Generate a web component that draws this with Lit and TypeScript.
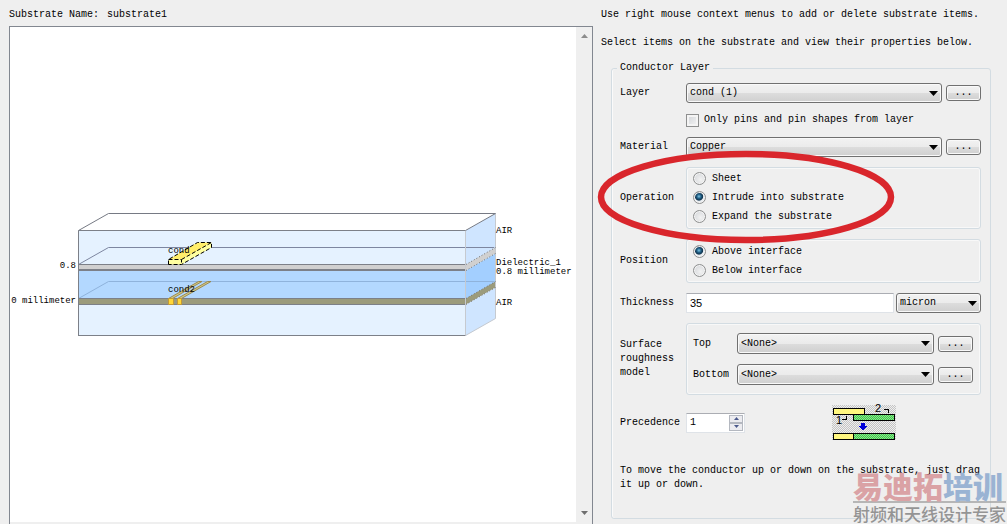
import { LitElement, html, css, svg } from "lit";
import { customElement, property, state } from "lit/decorators.js";

@customElement("substrate-view")
class SubstrateView extends LitElement {
  static styles = css`
    :host {
      display: grid;
      grid-template-columns: minmax(0, 1fr) 16px;
      grid-template-rows: minmax(0, 1fr) 2px;
      border: 1px solid #828790;
      border-bottom: 0;
      background: #efefef;
      min-height: 0;
    }
    .canvas {
      display: flex;
      align-items: center;
      background: #fff;
      min-height: 0;
      overflow: hidden;
    }
    .drawing {
      display: block;
      width: 100%;
    }
    .label {
      font: 9px "Liberation Mono", monospace;
      fill: #000;
    }
    .end {
      text-anchor: end;
    }
    .scroll {
      display: flex;
      flex-direction: column;
      justify-content: space-between;
      background: #efefef;
    }
    .arrow {
      display: block;
      width: 16px;
      height: 18px;
    }
  `;

  render() {
    return html`
      <div class="canvas">
        <svg class="drawing" viewBox="10 200 566 149" role="img" aria-label="Substrate cross section">
          <g shape-rendering="crispEdges">
            <rect x="78" y="230" width="388" height="35" fill="#e5f2ff" />
            <rect x="78" y="265" width="388" height="5" fill="#d0d0d0" />
            <rect x="78" y="271" width="388" height="28" fill="#b3d8ff" />
            <rect x="78" y="299" width="388" height="5" fill="#9b9b7c" />
            <rect x="78" y="305" width="388" height="30" fill="#e5f2ff" />
          </g>
          <path d="M466 230.500L495.500 213.500V248L466 265Z" fill="#cfe5ff" />
          <path d="M466 264.500L495.500 247.500V253.500L466 270.500Z" fill="#d0d0d0" />
          <path d="M466 270.500L495.500 253.500V282L466 299Z" fill="#a3cfff" />
          <path d="M466 298.500L495.500 281.500V287.500L466 304.500Z" fill="#9b9b7c" />
          <path d="M466 304.500L495.500 287.500V318.500L466 335.500Z" fill="#cfe5ff" />
          <g fill="none">
            <path d="M78.500 264.500L108.500 247.500H494" stroke="#7d86a0" />
            <path d="M78.500 298.500L108.500 281.500H494" stroke="#8fb3dc" />
            <path d="M78.500 230.500L108.500 213.500H495.500L465.500 230.500" stroke="#767a84" />
            <path d="M78.500 335.500V230.500H465.500M78 264.500H466M78 298.500H466M78 304.500H466M78 335.500H466" stroke="#7c8088" />
            <path d="M78 270H466" stroke="#7c8088" stroke-width="2" />
            <path d="M465.500 231V335.500L495.500 318.500V214" stroke="#c6cad0" />
            <path d="M466 264.500L495.500 247.500M466 270.500L495.500 253.500M466 298.500L495.500 281.500M466 304.500L495.500 287.500" stroke="#707070" stroke-dasharray="1 2" />
          </g>
          <path d="M168.500 259.500L197.500 242.500H211.500L182 259.500Z" fill="#ffee6b" />
          <path d="M168.500 259.500H181.500L211.500 242.500V247.500L181.500 264.500H168.500Z" fill="#ffffa0" />
          <path d="M168.500 264.500V259.500L197.500 242.500H211.500V247.500L181.500 264.500ZM168.500 259.500H181.500V264.500M181.500 259.500L211.500 242.500" fill="none" stroke="#000" stroke-dasharray="4 2" />
          <g fill="#dcc35c" stroke="#9a8a52">
            <path d="M168.500 298.500L198.500 281.500H202L172.500 298.500ZM177.500 298.500L207.500 281.500H211L181.500 298.500Z" fill-opacity=".75" />
            <path d="M168.500 298.500H173.500V304.500H168.500ZM177.500 298.500H181.500V304.500H177.500Z" fill="#ffd737" stroke="#c39a35" />
          </g>
          <text class="label" x="168" y="253">cond</text>
          <text class="label" x="168" y="292">cond2</text>
          <text class="label end" x="76" y="268">0.8</text>
          <text class="label end" x="76" y="303">0 millimeter</text>
          <text class="label" x="496" y="233">AIR</text>
          <text class="label" x="496" y="265">Dielectric_1</text>
          <text class="label" x="496" y="274">0.8 millimeter</text>
          <text class="label" x="496" y="305">AIR</text>
        </svg>
      </div>
      <div class="scroll">
        <svg class="arrow" viewBox="0 0 16 18"><path d="M5 11L8.500 7L12 11Z" fill="#8c8c8c" /></svg>
        <svg class="arrow" viewBox="0 0 16 18"><path d="M5 7H12L8.500 11Z" fill="#6e6e6e" /></svg>
      </div>
    `;
  }
}

@customElement("combo-box")
class ComboBox extends LitElement {
  @property() label = "";
  @property() value = "";

  static styles = css`
    :host {
      display: grid;
      min-width: 0;
    }
    .select,
    .arrow {
      grid-area: 1 / 1;
    }
    .select {
      appearance: none;
      box-sizing: border-box;
      width: 100%;
      height: 100%;
      margin: 0;
      padding: 0 18px 0 3px;
      border: 1px solid #707070;
      border-radius: 3px;
      box-shadow: inset 0 0 0 1px #f9f9f9;
      background: linear-gradient(#f2f2f2, #ebebeb 50%, #dddddd 50%, #cfcfcf);
      color: #000;
      font: 10px/14px "Liberation Mono", monospace;
    }
    .arrow {
      width: 9px;
      height: 5px;
      place-self: center end;
      margin-right: 4px;
      pointer-events: none;
    }
  `;

  render() {
    return html`
      <select class="select" aria-label=${this.label}>
        <option>${this.value}</option>
      </select>
      <svg class="arrow" viewBox="0 0 9 5"><path d="M0 0H9L4.500 5Z" /></svg>
    `;
  }
}

const precedencePicture = svg`
  <defs>
    <pattern id="grey" width="2" height="2" patternUnits="userSpaceOnUse">
      <path d="M0 0H1V1H0ZM1 1H2V2H1Z" fill="#c4c4c4" />
    </pattern>
    <pattern id="green" width="2" height="2" patternUnits="userSpaceOnUse">
      <rect width="2" height="2" fill="#8de08d" />
      <path d="M0 0H1V1H0ZM1 1H2V2H1Z" fill="#3fca4c" />
    </pattern>
  </defs>
  <g shape-rendering="crispEdges">
    <rect width="64" height="35" fill="url(#grey)" />
    <rect x="1.500" y="3.500" width="31" height="6" fill="#fff780" stroke="#000" />
    <rect x="21.500" y="9.500" width="41" height="6" fill="url(#green)" stroke="#000" />
    <rect x="1.500" y="28.500" width="20" height="6" fill="#fff780" stroke="#000" />
    <rect x="21.500" y="28.500" width="41" height="6" fill="url(#green)" stroke="#000" />
    <path d="M52 4.500H56.500V8M10 14.500H14.500V11" fill="none" stroke="#000" />
    <path d="M29 18H33V21H35V22H34V23H33V24H32V25H30V24H29V23H28V22H27V21H29Z" fill="#0000d8" />
  </g>
  <text class="digit" x="4" y="19">1</text>
  <text class="digit" x="43" y="7">2</text>
`;

@customElement("app-root")
class AppRoot extends LitElement {
  @state() private precedence = 1;

  static styles = css`
    :host {
      display: grid;
      grid-template-columns: minmax(0, 1fr) 414px;
      position: relative;
      box-sizing: border-box;
      height: 100vh;
      overflow: hidden;
      background: #efefef;
      color: #000;
      font: 10px/14px "Liberation Mono", "Noto Sans CJK SC", monospace;
    }
    .left {
      display: grid;
      grid-template-rows: 14px minmax(0, 1fr);
      gap: 4px;
      padding: 8px 0 0 9px;
      min-height: 0;
    }
    .name {
      display: flex;
      gap: 8px;
    }
    .right {
      padding: 8px 16px 0 8px;
    }
    .hint {
      margin: 0 0 14px;
    }
    .panel {
      margin: -3px 0 0 10px;
      min-width: 0;
      padding: 8px 9px 26px 8px;
      border: 1px solid #d3dce2;
      border-radius: 3px;
      box-shadow: inset 1px 0 #fafafa;
    }
    .legend {
      margin-left: -3px;
      padding: 0 3px;
    }
    .form {
      display: grid;
      grid-template-columns: 66px minmax(0, 1fr);
      gap: 10px 0;
      align-items: center;
    }
    .line {
      display: grid;
      grid-template-columns: minmax(0, 1fr) 35px;
      column-gap: 4px;
      align-items: center;
    }
    .combo {
      height: 20px;
    }
    .more {
      box-sizing: border-box;
      height: 16px;
      margin: 0;
      padding: 0;
      border: 1px solid #707070;
      border-radius: 3px;
      box-shadow: inset 0 0 0 1px #f9f9f9;
      background: linear-gradient(#f2f2f2, #ebebeb 50%, #dddddd 50%, #cfcfcf);
      color: #000;
      font: 10px/14px "Liberation Mono", monospace;
    }
    .check {
      grid-column: 2;
      display: flex;
      align-items: center;
      gap: 5px;
      height: 14px;
    }
    .box {
      appearance: none;
      box-sizing: border-box;
      width: 13px;
      height: 13px;
      margin: 0;
      border: 1px solid #8e8f8f;
      background: linear-gradient(135deg, #cfd2d6, #f6f6f6);
      box-shadow: inset 0 0 0 2px #f4f4f4;
    }
    .box:checked {
      background: #2c628b;
    }
    .group {
      position: relative;
      padding: 2px 6px;
      border: 1px solid #d3dce2;
      border-radius: 3px;
      box-shadow: inset 0 0 0 1px #f8f8f8;
    }
    .triple {
      padding: 1px 6px 2px;
    }
    .option {
      display: flex;
      align-items: center;
      gap: 6px;
      height: 19px;
    }
    .radio {
      appearance: none;
      box-sizing: border-box;
      width: 13px;
      height: 13px;
      margin: 0;
      border: 1px solid #8e8f8f;
      border-radius: 50%;
      background: radial-gradient(circle at 60% 60%, #f2f2f2, #cfd2d6);
      box-shadow: inset 0 0 0 1px #f4f4f4;
    }
    .radio:checked {
      background: radial-gradient(circle at 45% 40%, #7cc4e4, #1d5a80 25%, #12354f 42%, #e6eaee 52%);
    }
    .mark {
      position: absolute;
      left: -90px;
      top: -18px;
      width: 298px;
      height: 94px;
      pointer-events: none;
      z-index: 1;
    }
    .thickness {
      display: grid;
      grid-template-columns: minmax(0, 1fr) 85px;
      column-gap: 2px;
    }
    .text {
      box-sizing: border-box;
      width: 100%;
      height: 20px;
      margin: 0;
      padding: 0 3px;
      border: 1px solid #dfe3e8;
      border-top-color: #abadb3;
      background: #fff;
      color: #000;
      font: 11px/14px "Liberation Sans", sans-serif;
    }
    .rough {
      display: grid;
      grid-template-columns: 40px minmax(0, 1fr) 35px;
      gap: 10px 4px;
      align-items: center;
      padding: 9px 7px 9px 6px;
    }
    .tall {
      height: 21px;
    }
    .prec {
      display: flex;
      align-items: center;
      gap: 2px;
    }
    .spin {
      display: grid;
      grid-template-columns: minmax(0, 1fr) 14px;
      box-sizing: border-box;
      width: 59px;
      height: 20px;
      padding: 1px;
      border: 1px solid #dfe3e8;
      border-top-color: #abadb3;
      background: #fff;
    }
    .number {
      appearance: textfield;
      min-width: 0;
      margin: 0;
      padding: 0 2px;
      border: 0;
      background: none;
      color: #000;
      font: 10px/14px "Liberation Mono", monospace;
    }
    .number::-webkit-inner-spin-button {
      display: none;
    }
    .steps {
      display: grid;
      grid-template-rows: 8px 8px;
    }
    .step {
      display: grid;
      place-items: center;
      box-sizing: border-box;
      margin: 0;
      padding: 0;
      border: 1px solid #b4b8c0;
      background: #ececf0;
    }
    .tick {
      width: 5px;
      height: 3px;
      fill: #4c5a8c;
    }
    .pic {
      flex: 1;
      display: grid;
      justify-content: center;
    }
    .stack {
      display: block;
      width: 64px;
      height: 35px;
      overflow: visible;
    }
    .digit {
      font: 11px "Liberation Sans", sans-serif;
    }
    .note {
      margin: 24px 0 0;
    }
    .brand {
      position: absolute;
      right: 1px;
      bottom: 0;
      width: 153px;
      pointer-events: none;
      font-family: "Noto Sans CJK SC", sans-serif;
      white-space: nowrap;
      opacity: 0.8;
    }
    .big {
      height: 32px;
      border-bottom: 2px solid #a8a8a8;
      color: #d68f93;
      font-size: 30px;
      line-height: 32px;
      font-weight: 900;
    }
    .blue {
      color: #86a5cd;
    }
    .small {
      color: #7e7e7e;
      font-size: 17px;
      line-height: 21px;
      font-weight: 500;
    }
  `;

  private more(name: string) {
    return html`<button class="more" type="button" aria-label="${name} options">...</button>`;
  }

  private option(name: string, text: string, checked = false) {
    return html`<label class="option">
      <input class="radio" type="radio" name=${name} ?checked=${checked} />${text}
    </label>`;
  }

  private step(by: number) {
    this.precedence = Math.max(1, this.precedence + by);
  }

  render() {
    return html`
      <section class="left">
        <div class="name"><span>Substrate Name:</span><span>substrate1</span></div>
        <substrate-view></substrate-view>
      </section>
      <section class="right">
        <p class="hint">Use right mouse context menus to add or delete substrate items.</p>
        <p class="hint">Select items on the substrate and view their properties below.</p>
        <fieldset class="panel">
          <legend class="legend">Conductor Layer</legend>
          <div class="form">
            <span>Layer</span>
            <div class="line">
              <combo-box class="combo" label="Layer" value="cond (1)"></combo-box>
              ${this.more("Layer")}
            </div>
            <label class="check"><input class="box" type="checkbox" />Only pins and pin shapes from layer</label>
            <span>Material</span>
            <div class="line">
              <combo-box class="combo" label="Material" value="Copper"></combo-box>
              ${this.more("Material")}
            </div>
            <span id="operation">Operation</span>
            <div class="group triple" role="radiogroup" aria-labelledby="operation">
              ${this.option("operation", "Sheet")}
              ${this.option("operation", "Intrude into substrate", true)}
              ${this.option("operation", "Expand the substrate")}
              <svg class="mark" viewBox="0 0 298 94">
                <ellipse cx="149" cy="47" rx="145" ry="43" fill="none" stroke="#d9262c" stroke-width="6.500" />
              </svg>
            </div>
            <span id="position">Position</span>
            <div class="group" role="radiogroup" aria-labelledby="position">
              ${this.option("position", "Above interface", true)}
              ${this.option("position", "Below interface")}
            </div>
            <label for="thickness">Thickness</label>
            <div class="thickness">
              <input class="text" id="thickness" type="text" value="35" />
              <combo-box class="combo" label="Thickness unit" value="micron"></combo-box>
            </div>
            <span>Surface roughness model</span>
            <div class="group rough">
              <span>Top</span>
              <combo-box class="tall" label="Top" value="&lt;None&gt;"></combo-box>
              ${this.more("Top")}
              <span>Bottom</span>
              <combo-box class="tall" label="Bottom" value="&lt;None&gt;"></combo-box>
              ${this.more("Bottom")}
            </div>
            <label for="precedence">Precedence</label>
            <div class="prec">
              <div class="spin">
                <input class="number" id="precedence" type="number" .value=${String(this.precedence)} />
                <div class="steps">
                  <button class="step" type="button" aria-label="Increase" @click=${() => this.step(1)}>
                    <svg class="tick" viewBox="0 0 5 3"><path d="M0 3L2.500 0L5 3Z" /></svg>
                  </button>
                  <button class="step" type="button" aria-label="Decrease" @click=${() => this.step(-1)}>
                    <svg class="tick" viewBox="0 0 5 3"><path d="M0 0H5L2.500 3Z" /></svg>
                  </button>
                </div>
              </div>
              <div class="pic">
                <svg class="stack" viewBox="0 0 64 35" role="img" aria-label="Layer 2 takes precedence over layer 1">
                  ${precedencePicture}
                </svg>
              </div>
            </div>
          </div>
          <p class="note">To move the conductor up or down on the substrate, just drag it up or down.</p>
        </fieldset>
      </section>
      <div class="brand">
        <div class="big">易迪拓<span class="blue">培训</span></div>
        <div class="small">射频和天线设计专家</div>
      </div>
    `;
  }
}
